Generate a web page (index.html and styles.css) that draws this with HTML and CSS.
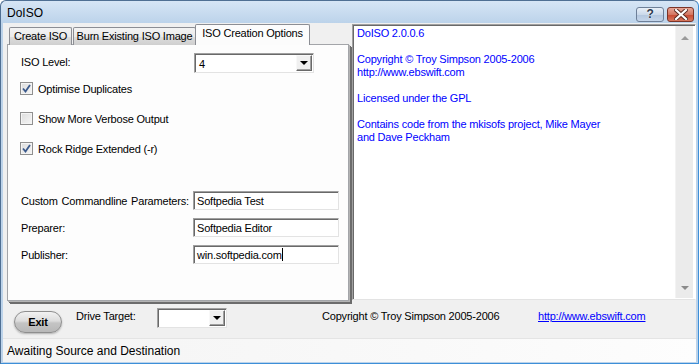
FILE: index.html
```html
<!DOCTYPE html>
<html lang="en">
<head>
    <meta charset="UTF-8">
    <title>DoISO</title>
    <link rel="stylesheet" href="styles.css">
</head>
<body>
    <div class="window">
        <div class="titlebar">
            <span class="title">DoISO</span>
            <div class="caption-buttons">
                <div class="cap help">?</div>
                <div class="cap close">
                    <svg width="14" height="11" viewBox="0 0 14 11">
                        <path d="M2 1 L12 10 M12 1 L2 10" stroke="#5a2a20" stroke-width="4" stroke-linecap="square"/>
                        <path d="M2 1 L12 10 M12 1 L2 10" stroke="#ffffff" stroke-width="2.2" stroke-linecap="square"/>
                    </svg>
                </div>
            </div>
        </div>

        <div class="client">
            <div class="main">
                <div class="tabctl">
                    <div class="tabstrip">
                        <div class="tab t1">Create ISO</div>
                        <div class="tab t2">Burn Existing ISO Image</div>
                        <div class="tab t3 active">ISO Creation Options</div>
                    </div>
                    <div class="tabpage">
                        <div class="row iso-row">
                            <label class="field-label">ISO Level:</label>
                            <div class="combo wide">
                                <span class="combo-value">4</span>
                                <span class="combo-btn"><i class="arrow"></i></span>
                            </div>
                        </div>

                        <div class="check-row first">
                            <span class="checkbox checked">
                                <svg width="9" height="9" viewBox="0 0 9 9"><path d="M1 4.5 L3.5 7.5 L8 1" fill="none" stroke="#3c5a8c" stroke-width="1.8"/></svg>
                            </span>
                            <span>Optimise Duplicates</span>
                        </div>
                        <div class="check-row">
                            <span class="checkbox"></span>
                            <span>Show More Verbose Output</span>
                        </div>
                        <div class="check-row">
                            <span class="checkbox checked">
                                <svg width="9" height="9" viewBox="0 0 9 9"><path d="M1 4.5 L3.5 7.5 L8 1" fill="none" stroke="#3c5a8c" stroke-width="1.8"/></svg>
                            </span>
                            <span>Rock Ridge Extended (-r)</span>
                        </div>

                        <div class="row text-row first-text">
                            <label class="field-label spaced">Custom Commandline Parameters:</label>
                            <div class="textbox">Softpedia Test</div>
                        </div>
                        <div class="row text-row">
                            <label class="field-label">Preparer:</label>
                            <div class="textbox">Softpedia Editor</div>
                        </div>
                        <div class="row text-row">
                            <label class="field-label">Publisher:</label>
                            <div class="textbox">win.softpedia.com<span class="caret"></span></div>
                        </div>
                    </div>
                </div>

                <div class="about">
                    <div class="about-text">
                        <p>DoISO 2.0.0.6</p>
                        <p>Copyright &copy; Troy Simpson 2005-2006<br>http://www.ebswift.com</p>
                        <p>Licensed under the GPL</p>
                        <p>Contains code from the mkisofs project, Mike Mayer<br>and Dave Peckham</p>
                    </div>
                    <div class="vscroll">
                        <span class="sarrow up"></span>
                        <span class="sarrow down"></span>
                    </div>
                </div>
            </div>

            <div class="actions">
                <div class="exit-btn">Exit</div>
                <span class="drive-label">Drive Target:</span>
                <div class="combo small">
                    <span class="combo-value"></span>
                    <span class="combo-btn"><i class="arrow"></i></span>
                </div>
                <span class="copyright">Copyright &copy; Troy Simpson 2005-2006</span>
                <a href="#" class="site-link">http://www.ebswift.com</a>
            </div>

            <div class="statusbar">Awaiting Source and Destination</div>
        </div>
    </div>
</body>
</html>
```

FILE: styles.css
```css
html, body {
    margin: 0;
    padding: 0;
    background: #ffffff;
}
body {
    font-family: "Liberation Sans", Arial, sans-serif;
    font-size: 11px;
    letter-spacing: -0.2px;
    color: #000;
}
.window {
    width: 699px;
    height: 364px;
    box-sizing: border-box;
    border: 1px solid #4f6f93;
    border-bottom-color: #3d8fd8;
    border-right-color: #3d8fd8;
    border-radius: 6px 6px 0 0;
    background: linear-gradient(#d6e5f5, #bcd3ea 22px, #bcd3ea);
    padding: 0 2px 1px 2px;
    display: flex;
    flex-direction: column;
}

/* title bar */
.titlebar {
    height: 22px;
    display: flex;
    align-items: center;
    justify-content: space-between;
}
.title {
    font-size: 12px;
    letter-spacing: 0;
    padding-left: 4px;
    margin-top: 2px;
}
.caption-buttons {
    display: flex;
    gap: 3px;
    margin-top: 4px;
    margin-right: 2px;
}
.cap {
    height: 15px;
    box-sizing: border-box;
    border: 1px solid #6d7f98;
    border-radius: 3px;
    display: flex;
    align-items: center;
    justify-content: center;
}
.help {
    width: 28px;
    background: linear-gradient(#e8eff8, #cbd9ea 50%, #b3c6de 51%, #c4d5ea);
    font-weight: bold;
    font-size: 12px;
    color: #2c3a4e;
    text-shadow: 0 0 2px #fff;
}
.close {
    width: 27px;
    border-color: #7a3428;
    background: linear-gradient(#e6a595, #d47762 50%, #c7462e 51%, #d6785f);
}

/* client area */
.client {
    flex: 1;
    background: #f0f0f0;
    display: flex;
    flex-direction: column;
}
.main {
    display: flex;
    gap: 3px;
    padding-left: 4px;
    margin-top: 2px;
    height: 278px;
}

/* tab control */
.tabctl {
    width: 342px;
    display: flex;
    flex-direction: column;
}
.tabstrip {
    height: 20px;
    display: flex;
    align-items: flex-end;
    padding-left: 2px;
    position: relative;
    z-index: 1;
    margin-bottom: -1px;
}
.tab {
    height: 18px;
    box-sizing: border-box;
    border: 1px solid #8c8e94;
    border-bottom: none;
    border-radius: 2px 2px 0 0;
    background: linear-gradient(#f3f3f3, #ebebeb 50%, #dddddd 51%, #cfcfcf);
    text-align: center;
    line-height: 17px;
    white-space: nowrap;
}
.t1 { width: 63px; }
.t2 { width: 123px; margin-left: 1px; }
.t3 { width: 115px; }
.tab.active {
    height: 21px;
    background: #fcfcfc;
    line-height: 17px;
    margin-left: -1px;
}
.tabpage {
    flex: 1;
    margin-bottom: 2px;
    background: #fdfdfd;
    border: 1px solid #a3a5a9;
    box-shadow: 1px 1px 0 #b4b4b4, 2px 2px 0 #6c6c6c, 3px 3px 0 #6c6c6c;
    padding: 8px 0 0 12px;
}
.row {
    display: flex;
    align-items: center;
}
.field-label {
    width: 174px;
    padding-left: 1px;
    box-sizing: border-box;
    white-space: nowrap;
}
.field-label.spaced {
    word-spacing: 1px;
}
.iso-row {
    height: 20px;
}
.iso-row .field-label {
    margin-top: -3px;
}
.check-row {
    display: flex;
    align-items: center;
    gap: 5px;
    height: 13px;
    margin-top: 17px;
}
.check-row.first {
    margin-top: 9px;
}
.checkbox {
    width: 13px;
    height: 13px;
    box-sizing: border-box;
    border: 1px solid #8f8f8f;
    background: linear-gradient(135deg, #dcdcdc, #f6f6f6);
    box-shadow: inset 0 0 0 1px #f4f4f4;
    display: flex;
    align-items: center;
    justify-content: center;
}
.text-row {
    height: 19px;
    margin-top: 8px;
}
.text-row.first-text {
    margin-top: 36px;
}
.textbox {
    width: 146px;
    height: 19px;
    margin-left: -1px;
    box-sizing: border-box;
    background: #fff;
    border: 1px solid;
    border-color: #a0a0a0 #e3e3e3 #e3e3e3 #a0a0a0;
    box-shadow: inset 1px 1px 0 #696969;
    padding: 2px 0 0 3px;
    line-height: 14px;
    white-space: nowrap;
}
.caret {
    display: inline-block;
    width: 1px;
    height: 13px;
    background: #000;
    vertical-align: -2px;
}

/* combo boxes */
.combo {
    height: 20px;
    box-sizing: border-box;
    background: #fff;
    border: 1px solid;
    border-color: #a0a0a0 #e3e3e3 #e3e3e3 #a0a0a0;
    box-shadow: inset 1px 1px 0 #696969;
    display: flex;
    align-items: center;
    justify-content: space-between;
    padding: 1px 1px 1px 2px;
}
.combo.wide { width: 120px; }
.combo.small { width: 70px; }
.combo-value {
    padding-left: 2px;
    padding-top: 1px;
}
.combo-btn {
    width: 16px;
    height: 16px;
    box-sizing: border-box;
    background: #f0f0f0;
    border: 1px solid;
    border-color: #f8f8f8 #696969 #696969 #f8f8f8;
    box-shadow: inset -1px -1px 0 #a0a0a0;
    display: flex;
    align-items: center;
    justify-content: center;
}
.arrow {
    width: 0;
    height: 0;
    border-left: 4px solid transparent;
    border-right: 4px solid transparent;
    border-top: 4px solid #000;
}

/* about box */
.about {
    flex: 1;
    margin-top: -1px;
    margin-bottom: 3px;
    display: flex;
    box-sizing: border-box;
    background: #fff;
    border: 1px solid;
    border-color: #a0a0a0 #ffffff #e3e3e3 #a0a0a0;
    box-shadow: inset 1px 1px 0 #696969;
    padding: 2px 2px 2px 4px;
    color: #0000ff;
}
.about-text {
    flex: 1;
    line-height: 13px;
}
.about-text p {
    margin: 0 0 13px 0;
}
.vscroll {
    width: 17px;
    background: #ebebeb;
    border-left: 1px solid #f3f3f3;
    margin: -1px 0 -1px 0;
    display: flex;
    flex-direction: column;
    justify-content: space-between;
    align-items: center;
    padding: 10px 0 8px 0;
}
.sarrow {
    width: 0;
    height: 0;
    border-left: 4px solid transparent;
    border-right: 4px solid transparent;
}
.sarrow.up { border-bottom: 4px solid #9a9a9a; }
.sarrow.down { border-top: 4px solid #8a8a8a; }

/* bottom action row */
.actions {
    height: 35px;
    display: flex;
    align-items: center;
    padding-left: 11px;
}
.exit-btn {
    width: 48px;
    height: 22px;
    box-sizing: border-box;
    border: 1px solid #8e8e8e;
    border-radius: 11px;
    background: linear-gradient(#f2f2f2, #dcdcdc 45%, #c4c4c4 55%, #b8b8b8);
    box-shadow: 0 1px 2px #b0b0b0;
    font-weight: bold;
    text-align: center;
    line-height: 20px;
    margin-top: 3px;
}
.drive-label {
    width: 81px;
    margin-left: 14px;
    margin-top: -10px;
}
.combo.small {
    margin-top: -5px;
}
.copyright {
    width: 216px;
    margin-left: 95px;
    margin-top: -9px;
}
.site-link {
    margin-top: -9px;
    color: #0000ff;
}

.statusbar {
    flex: 1;
    background: linear-gradient(90deg, #f4f4f4, #f9f9f9 60%, #fdfdfd);
    border-top: 1px solid #e4e4e4;
    font-size: 12px;
    letter-spacing: 0;
    padding-left: 4px;
    display: flex;
    align-items: center;
}
```
